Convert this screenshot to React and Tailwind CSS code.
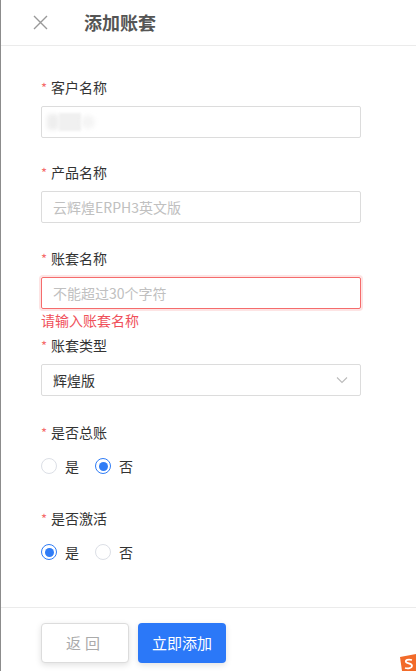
import React, { useState } from "react";

const font = { fontFamily: '"Noto Sans CJK SC", "Noto Sans", sans-serif' };

function Label({ children }) {
  return (
    <div className="flex items-center h-[20px] text-[14px] text-[#333]">
      <span className="text-[#f56c6c] mr-[4px] text-[13px] leading-none">*</span>
      {children}
    </div>
  );
}

function Radio({ checked, label, onClick }) {
  return (
    <label className="flex items-center h-[20px] cursor-pointer mr-[16px]" onClick={onClick}>
      <span
        className={
          checked
            ? "w-[16px] h-[16px] rounded-full border border-[#2f7cf6] flex items-center justify-center"
            : "w-[16px] h-[16px] rounded-full border border-[#dcdfe6]"
        }
      >
        {checked && <span className="w-[9px] h-[9px] rounded-full bg-[#2f7cf6]" />}
      </span>
      <span className="ml-[8px] text-[14px] leading-[20px] text-[#333]">{label}</span>
    </label>
  );
}

export default function App() {
  const [zongzhang, setZongzhang] = useState(false);
  const [jihuo, setJihuo] = useState(true);

  return (
    <div style={font} className="relative w-full h-[671px] bg-white border-l border-[#8c8c8c] flex flex-col overflow-hidden">
      <div className="h-[46px] border-b border-[#ebebeb] flex items-center shrink-0">
        <svg className="ml-[32px]" width="15" height="15" viewBox="0 0 15 15">
          <path d="M1 1 L14 14 M14 1 L1 14" stroke="#999" strokeWidth="1.4" />
        </svg>
        <h1 className="ml-[36px] text-[18px] font-bold text-[#555]">添加账套</h1>
      </div>

      <div className="flex-1 pl-[40px] pt-[31px]">
        <div className="w-[320px]">
          <Label>客户名称</Label>
          <div className="mt-[9px] h-[32px] border border-[#dcdcdc] rounded-[2px] flex items-center pl-[5px]">
            <div className="w-[12px] h-[16px] bg-[#eee] rounded blur-[2px]" />
            <div className="w-[22px] h-[18px] bg-[#f0f0f0] blur-[1px]" />
            <div className="w-[14px] h-[14px] bg-[#f5f5f5] rounded-full blur-[2px]" />
          </div>

          <div className="mt-[24px]">
            <Label>产品名称</Label>
            <input
              className="mt-[9px] w-full h-[32px] border border-[#dcdcdc] rounded-[2px] px-[11px] text-[14px] outline-none placeholder:text-[#c0c0c0]"
              placeholder="云辉煌ERPH3英文版"
            />
          </div>

          <div className="mt-[25px]">
            <Label>账套名称</Label>
            <input
              className="mt-[9px] w-full h-[32px] border border-[#f56c6c] rounded-[2px] px-[11px] text-[14px] outline-none shadow-[0_0_0_2px_rgba(245,108,108,0.18)] placeholder:text-[#c0c0c0]"
              placeholder="不能超过30个字符"
            />
            <div className="text-[14px] leading-[20px] text-[#f0505a] mt-[1px]">请输入账套名称</div>
          </div>

          <div className="mt-[5px]">
            <Label>账套类型</Label>
            <div className="mt-[9px] h-[32px] border border-[#dcdcdc] rounded-[2px] px-[11px] flex items-center justify-between">
              <span className="text-[14px] text-[#333]">辉煌版</span>
              <svg width="12" height="8" viewBox="0 0 12 8" className="mr-[1px]">
                <path d="M1 1.5 L6 6.5 L11 1.5" fill="none" stroke="#bbb" strokeWidth="1.1" />
              </svg>
            </div>
          </div>

          <div className="mt-[26px]">
            <Label>是否总账</Label>
            <div className="mt-[14px] flex items-center">
              <Radio checked={zongzhang} label="是" onClick={() => setZongzhang(true)} />
              <Radio checked={!zongzhang} label="否" onClick={() => setZongzhang(false)} />
            </div>
          </div>

          <div className="mt-[32px]">
            <Label>是否激活</Label>
            <div className="mt-[14px] flex items-center">
              <Radio checked={jihuo} label="是" onClick={() => setJihuo(true)} />
              <Radio checked={!jihuo} label="否" onClick={() => setJihuo(false)} />
            </div>
          </div>
        </div>
      </div>

      <div className="h-[64px] shrink-0 border-t border-[#ebebeb] pl-[40px] pt-[15px] flex gap-[9px]">
        <button className="w-[88px] h-[40px] border border-[#dcdcdc] rounded-[4px] bg-white text-[15px] text-[#aaa] tracking-[4px] shadow-[0_2px_6px_rgba(0,0,0,0.12)]">
          返回
        </button>
        <button className="w-[88px] h-[40px] rounded-[4px] bg-[#2b78f8] text-[15px] text-white shadow-[0_2px_6px_rgba(0,0,0,0.12)]">
          立即添加
        </button>
      </div>

      <svg className="absolute right-0 bottom-0" width="18" height="18" viewBox="0 0 18 18">
        <path d="M2 4 L18 1 L18 18 L4 18 Z" fill="#f26b2a" />
        <path d="M14 7 C10 6 7 7 8 9 C9 11 14 10 14 13 C14 15 10 16 7 15" fill="none" stroke="#fff" strokeWidth="1.8" />
      </svg>
    </div>
  );
}
